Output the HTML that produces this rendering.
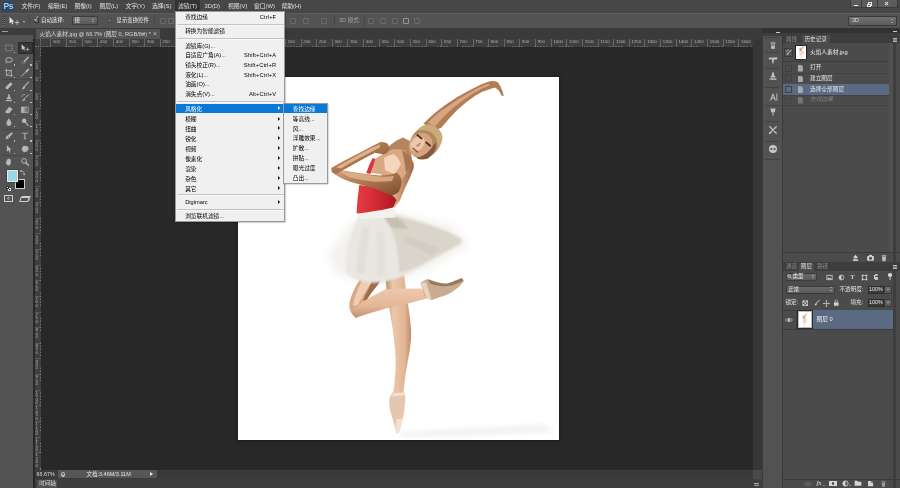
<!DOCTYPE html>
<html lang="zh-CN">
<head>
<meta charset="utf-8">
<title>Photoshop</title>
<style>
*{box-sizing:border-box;margin:0;padding:0}
html,body{width:900px;height:488px;overflow:hidden;background:#282828}
body{will-change:transform}
body{position:relative;font-family:"Liberation Sans","Noto Sans CJK SC",sans-serif;font-size:5.6px;line-height:1;color:#d6d6d6;-webkit-font-smoothing:antialiased}
.a{position:absolute;white-space:nowrap}
#menubar{left:0;top:0;width:900px;height:13px;background:#474747}
#optbar{left:0;top:13px;width:900px;height:15px;background:#535353;border-top:1px solid #5e5e5e}
#tabbar{left:33px;top:28px;width:730px;height:11px;background:#3a3a3a}
#tab{left:36px;top:29px;width:124px;height:10px;background:#535353}
#toolbox{left:0;top:28px;width:33px;height:460px;background:#535353}
#toolhead{left:0;top:28px;width:33px;height:7px;background:#3c3c3c}
#rulerh{left:34.5px;top:39px;width:718px;height:8px;background:#3e3e3e}
#rulerv{left:34.5px;top:39px;width:6.5px;height:431px;background:#3e3e3e}
#canvas{left:41px;top:47px;width:711.5px;height:423px;background:#282828}
#photo{left:238.3px;top:76.5px;width:320.7px;height:363.5px;background:#fff;box-shadow:0 0 2.5px 0.5px #1b1b1b}
#statusbar{left:34.5px;top:470px;width:718px;height:8.7px;background:#3a3a3a}
#timeline{left:34.5px;top:478.7px;width:728px;height:9.3px;background:#3e3e3e}
#vscroll{left:752.5px;top:39px;width:9.5px;height:431px;background:#373737}
#rightdock{left:762px;top:28px;width:138px;height:460px;background:#3a3a3a}
.mi{color:#e0e0e0;top:3.9px;font-size:5.8px}
.rl{font-size:4.3px;color:#b4b4b4}
.mt{font-size:5.7px}
.ti{opacity:.78}
.ot{color:#ececec;font-size:5.4px;margin-top:.2px}
</style>
</head>
<body>
<div class="a" id="menubar"></div>
<div class="a" id="optbar"></div>
<div class="a" id="rightdock"></div>
<div class="a" id="tabbar"></div>
<div class="a" id="tab"></div>
<div class="a" id="toolbox"></div>
<div class="a" id="toolhead"></div>
<div class="a" id="canvas"></div>
<div class="a" id="rulerh"></div>
<div class="a" id="rulerv"></div>
<div class="a" id="vscroll"></div>
<div class="a" id="photo"></div>
<div class="a" id="statusbar"></div>
<div class="a" id="timeline"></div>

<div class="a" style="left:2px;top:1px;width:12px;height:11px;background:#2c4866;border-radius:1px"></div>
<div class="a" style="left:3.5px;top:1.5px;font-size:8.5px;font-weight:bold;color:#a5cdf0;letter-spacing:-0.3px">Ps</div>
<div class="a" style="left:174.5px;top:0;width:25px;height:13px;background:#333"></div>
<div class="a mi" style="left:21.5px">文件(F)</div>
<div class="a mi" style="left:48px">编辑(E)</div>
<div class="a mi" style="left:74.5px">图像(I)</div>
<div class="a mi" style="left:99.5px">图层(L)</div>
<div class="a mi" style="left:125.5px">文字(Y)</div>
<div class="a mi" style="left:152px">选择(S)</div>
<div class="a mi" style="left:178px">滤镜(T)</div>
<div class="a mi" style="left:204.5px">3D(D)</div>
<div class="a mi" style="left:228px">视图(V)</div>
<div class="a mi" style="left:254px">窗口(W)</div>
<div class="a mi" style="left:281.5px">帮助(H)</div>
<div class="a" style="left:850px;top:0;width:12px;height:8px;background:#5c5c5c;border:1px solid #3a3a3a;border-top:0"></div>
<div class="a" style="left:862px;top:0;width:16px;height:8px;background:#5c5c5c;border:1px solid #3a3a3a;border-top:0;border-left:0"></div>
<div class="a" style="left:878px;top:0;width:20px;height:8px;background:#5c5c5c;border:1px solid #3a3a3a;border-top:0;border-left:0"></div>
<div class="a" style="left:853.5px;top:4.5px;width:4.5px;height:1.5px;background:#e8e8e8"></div>
<div class="a" style="left:868px;top:2px;width:4px;height:3.5px;border:1px solid #e8e8e8"></div>
<div class="a" style="left:866.5px;top:3.5px;width:4px;height:3.5px;border:1px solid #e8e8e8;background:#5c5c5c"></div>
<div class="a" style="left:884.5px;top:-0.5px;font-size:7px;font-weight:bold;color:#ececec">×</div>
<!--MENUBAR-->

<svg class="a" style="left:8px;top:16px" width="12" height="10" viewBox="0 0 12 10"><path d="M1.5 1 L1.5 7.5 L3.2 6 L4.4 8.6 L5.4 8.1 L4.3 5.7 L6.3 5.5 Z" fill="#e6e6e6"/><path d="M9 4.2v4.6M6.7 6.5h4.6" stroke="#d0d0d0" stroke-width="0.8"/></svg>
<div class="a" style="left:22.5px;top:20.5px;width:0;height:0;border-left:1.6px solid transparent;border-right:1.6px solid transparent;border-top:2px solid #bdbdbd"></div>
<div class="a" style="left:28.5px;top:15px;width:1px;height:11px;background:#464646"></div>
<div class="a" style="left:33.5px;top:17.5px;width:5.5px;height:5.5px;background:#6a6a6a;border:0.5px solid #3a3a3a"></div>
<div class="a" style="left:34px;top:16px;font-size:6px;color:#f0f0f0">✓</div>
<div class="a ot" style="left:41px;top:17.5px">自动选择:</div>
<div class="a" style="left:71.5px;top:16px;width:26px;height:9px;background:linear-gradient(#6b6b6b,#5a5a5a);border:0.5px solid #3c3c3c;border-radius:1px"></div>
<div class="a ot" style="left:74.5px;top:17.5px">组</div>
<div class="a" style="left:92px;top:18.5px;width:0;height:0;border-left:1.4px solid transparent;border-right:1.4px solid transparent;border-bottom:1.6px solid #cfcfcf"></div>
<div class="a" style="left:92px;top:21.2px;width:0;height:0;border-left:1.4px solid transparent;border-right:1.4px solid transparent;border-top:1.6px solid #cfcfcf"></div>
<div class="a" style="left:106.8px;top:17.8px;width:5px;height:5px;background:#606060;border:0.5px solid #474747"></div>
<div class="a ot" style="left:116.5px;top:17.5px">显示变换控件</div>
<div class="a" style="left:153.5px;top:15px;width:1px;height:11px;background:#464646"></div>
<div class="a" style="left:334px;top:15px;width:1px;height:11px;background:#464646"></div>
<div class="a" style="left:364px;top:15px;width:1px;height:11px;background:#464646"></div>
<div class="a" style="left:339px;top:17.5px;font-size:5.6px;color:#a2a2a2">3D 模式:</div>
<div class="a" style="left:848px;top:16px;width:49px;height:10px;background:linear-gradient(#707070,#5c5c5c);border:0.5px solid #3a3a3a;border-radius:1px"></div>
<div class="a" style="left:852px;top:18px;font-size:5.6px;color:#dcdcdc">3D</div>
<div class="a" style="left:890.5px;top:18.5px;width:0;height:0;border-left:1.4px solid transparent;border-right:1.4px solid transparent;border-bottom:1.6px solid #cfcfcf"></div>
<div class="a" style="left:890.5px;top:21.5px;width:0;height:0;border-left:1.4px solid transparent;border-right:1.4px solid transparent;border-top:1.6px solid #cfcfcf"></div>
<div class="a" style="left:160px;top:18px;width:6px;height:6px;border:0.8px solid #7c7c7c;opacity:.55;border-radius:1px"></div>
<div class="a" style="left:168px;top:18px;width:6px;height:6px;border:0.8px solid #7c7c7c;opacity:.55;border-radius:1px"></div>
<div class="a" style="left:176px;top:18px;width:6px;height:6px;border:0.8px solid #7c7c7c;opacity:.55;border-radius:1px"></div>
<div class="a" style="left:187px;top:18px;width:6px;height:6px;border:0.8px solid #7c7c7c;opacity:.55;border-radius:1px"></div>
<div class="a" style="left:195px;top:18px;width:6px;height:6px;border:0.8px solid #7c7c7c;opacity:.55;border-radius:1px"></div>
<div class="a" style="left:203px;top:18px;width:6px;height:6px;border:0.8px solid #7c7c7c;opacity:.55;border-radius:1px"></div>
<div class="a" style="left:216px;top:18px;width:6px;height:6px;border:0.8px solid #7c7c7c;opacity:.55;border-radius:1px"></div>
<div class="a" style="left:224px;top:18px;width:6px;height:6px;border:0.8px solid #7c7c7c;opacity:.55;border-radius:1px"></div>
<div class="a" style="left:232px;top:18px;width:6px;height:6px;border:0.8px solid #7c7c7c;opacity:.55;border-radius:1px"></div>
<div class="a" style="left:243px;top:18px;width:6px;height:6px;border:0.8px solid #7c7c7c;opacity:.55;border-radius:1px"></div>
<div class="a" style="left:251px;top:18px;width:6px;height:6px;border:0.8px solid #7c7c7c;opacity:.55;border-radius:1px"></div>
<div class="a" style="left:259px;top:18px;width:6px;height:6px;border:0.8px solid #7c7c7c;opacity:.55;border-radius:1px"></div>
<div class="a" style="left:290px;top:18px;width:6px;height:6px;border:0.8px solid #7c7c7c;opacity:.55;border-radius:1px"></div>
<div class="a" style="left:303px;top:18px;width:6px;height:6px;border:0.8px solid #7c7c7c;opacity:.55;border-radius:1px"></div>
<div class="a" style="left:321px;top:18px;width:6px;height:6px;border:0.8px solid #7c7c7c;opacity:.55;border-radius:1px"></div>
<div class="a" style="left:368px;top:18px;width:6px;height:6px;border:0.8px solid #7c7c7c;opacity:.55;border-radius:1px"></div>
<div class="a" style="left:379.5px;top:18px;width:6px;height:6px;border:0.8px solid #7c7c7c;opacity:.55;border-radius:1px"></div>
<div class="a" style="left:391.5px;top:18px;width:6px;height:6px;border:0.8px solid #7c7c7c;opacity:.55;border-radius:1px"></div>
<div class="a" style="left:402.5px;top:18px;width:6px;height:6px;border:0.8px solid #c8c8c8;opacity:.55;border-radius:1px"></div>
<div class="a" style="left:413.5px;top:18px;width:6px;height:6px;border:0.8px solid #7c7c7c;opacity:.55;border-radius:1px"></div>
<div class="a" style="left:1.5px;top:15.5px;width:1px;height:10px;background:repeating-linear-gradient(180deg,#3a3a3a 0 1px,#6a6a6a 1px 2px)"></div>
<div class="a" style="left:3.5px;top:15.5px;width:1px;height:10px;background:repeating-linear-gradient(180deg,#3a3a3a 0 1px,#6a6a6a 1px 2px)"></div>
<!--OPTIONS-->

<div class="a" style="left:39.5px;top:32px;font-size:5.7px;color:#d8d8d8">火焰人素材.jpg @ 66.7% (图层 0, RGB/8#) *</div>
<div class="a" style="left:153px;top:31.2px;font-size:6.5px;color:#c4c4c4">×</div>
<div class="a rl" style="left:53.2px;top:40.3px">600</div><div class="a" style="left:50.4px;top:39px;width:0.6px;height:8px;background:#676767"></div><div class="a rl" style="left:68.9px;top:40.3px">550</div><div class="a" style="left:66.1px;top:39px;width:0.6px;height:8px;background:#676767"></div><div class="a rl" style="left:84.5px;top:40.3px">500</div><div class="a" style="left:81.7px;top:39px;width:0.6px;height:8px;background:#676767"></div><div class="a rl" style="left:100.1px;top:40.3px">450</div><div class="a" style="left:97.3px;top:39px;width:0.6px;height:8px;background:#676767"></div><div class="a rl" style="left:115.8px;top:40.3px">400</div><div class="a" style="left:113.0px;top:39px;width:0.6px;height:8px;background:#676767"></div><div class="a rl" style="left:131.4px;top:40.3px">350</div><div class="a" style="left:128.6px;top:39px;width:0.6px;height:8px;background:#676767"></div><div class="a rl" style="left:147.0px;top:40.3px">300</div><div class="a" style="left:144.2px;top:39px;width:0.6px;height:8px;background:#676767"></div><div class="a rl" style="left:162.6px;top:40.3px">250</div><div class="a" style="left:159.8px;top:39px;width:0.6px;height:8px;background:#676767"></div><div class="a rl" style="left:178.3px;top:40.3px">200</div><div class="a" style="left:175.5px;top:39px;width:0.6px;height:8px;background:#676767"></div><div class="a rl" style="left:193.9px;top:40.3px">150</div><div class="a" style="left:191.1px;top:39px;width:0.6px;height:8px;background:#676767"></div><div class="a rl" style="left:209.5px;top:40.3px">100</div><div class="a" style="left:206.7px;top:39px;width:0.6px;height:8px;background:#676767"></div><div class="a rl" style="left:225.2px;top:40.3px">50</div><div class="a" style="left:222.4px;top:39px;width:0.6px;height:8px;background:#676767"></div><div class="a rl" style="left:240.8px;top:40.3px">0</div><div class="a" style="left:238.0px;top:39px;width:0.6px;height:8px;background:#676767"></div><div class="a rl" style="left:256.4px;top:40.3px">50</div><div class="a" style="left:253.6px;top:39px;width:0.6px;height:8px;background:#676767"></div><div class="a rl" style="left:272.1px;top:40.3px">100</div><div class="a" style="left:269.3px;top:39px;width:0.6px;height:8px;background:#676767"></div><div class="a rl" style="left:287.7px;top:40.3px">150</div><div class="a" style="left:284.9px;top:39px;width:0.6px;height:8px;background:#676767"></div><div class="a rl" style="left:303.3px;top:40.3px">200</div><div class="a" style="left:300.5px;top:39px;width:0.6px;height:8px;background:#676767"></div><div class="a rl" style="left:318.9px;top:40.3px">250</div><div class="a" style="left:316.1px;top:39px;width:0.6px;height:8px;background:#676767"></div><div class="a rl" style="left:334.6px;top:40.3px">300</div><div class="a" style="left:331.8px;top:39px;width:0.6px;height:8px;background:#676767"></div><div class="a rl" style="left:350.2px;top:40.3px">350</div><div class="a" style="left:347.4px;top:39px;width:0.6px;height:8px;background:#676767"></div><div class="a rl" style="left:365.8px;top:40.3px">400</div><div class="a" style="left:363.0px;top:39px;width:0.6px;height:8px;background:#676767"></div><div class="a rl" style="left:381.5px;top:40.3px">450</div><div class="a" style="left:378.7px;top:39px;width:0.6px;height:8px;background:#676767"></div><div class="a rl" style="left:397.1px;top:40.3px">500</div><div class="a" style="left:394.3px;top:39px;width:0.6px;height:8px;background:#676767"></div><div class="a rl" style="left:412.7px;top:40.3px">550</div><div class="a" style="left:409.9px;top:39px;width:0.6px;height:8px;background:#676767"></div><div class="a rl" style="left:428.4px;top:40.3px">600</div><div class="a" style="left:425.6px;top:39px;width:0.6px;height:8px;background:#676767"></div><div class="a rl" style="left:444.0px;top:40.3px">650</div><div class="a" style="left:441.2px;top:39px;width:0.6px;height:8px;background:#676767"></div><div class="a rl" style="left:459.6px;top:40.3px">700</div><div class="a" style="left:456.8px;top:39px;width:0.6px;height:8px;background:#676767"></div><div class="a rl" style="left:475.3px;top:40.3px">750</div><div class="a" style="left:472.5px;top:39px;width:0.6px;height:8px;background:#676767"></div><div class="a rl" style="left:490.9px;top:40.3px">800</div><div class="a" style="left:488.1px;top:39px;width:0.6px;height:8px;background:#676767"></div><div class="a rl" style="left:506.5px;top:40.3px">850</div><div class="a" style="left:503.7px;top:39px;width:0.6px;height:8px;background:#676767"></div><div class="a rl" style="left:522.1px;top:40.3px">900</div><div class="a" style="left:519.3px;top:39px;width:0.6px;height:8px;background:#676767"></div><div class="a rl" style="left:537.8px;top:40.3px">950</div><div class="a" style="left:535.0px;top:39px;width:0.6px;height:8px;background:#676767"></div><div class="a rl" style="left:553.4px;top:40.3px">1000</div><div class="a" style="left:550.6px;top:39px;width:0.6px;height:8px;background:#676767"></div><div class="a rl" style="left:569.0px;top:40.3px">1050</div><div class="a" style="left:566.2px;top:39px;width:0.6px;height:8px;background:#676767"></div><div class="a rl" style="left:584.7px;top:40.3px">1100</div><div class="a" style="left:581.9px;top:39px;width:0.6px;height:8px;background:#676767"></div><div class="a rl" style="left:600.3px;top:40.3px">1150</div><div class="a" style="left:597.5px;top:39px;width:0.6px;height:8px;background:#676767"></div><div class="a rl" style="left:615.9px;top:40.3px">1200</div><div class="a" style="left:613.1px;top:39px;width:0.6px;height:8px;background:#676767"></div><div class="a rl" style="left:631.6px;top:40.3px">1250</div><div class="a" style="left:628.8px;top:39px;width:0.6px;height:8px;background:#676767"></div><div class="a rl" style="left:647.2px;top:40.3px">1300</div><div class="a" style="left:644.4px;top:39px;width:0.6px;height:8px;background:#676767"></div><div class="a rl" style="left:662.8px;top:40.3px">1350</div><div class="a" style="left:660.0px;top:39px;width:0.6px;height:8px;background:#676767"></div><div class="a rl" style="left:678.4px;top:40.3px">1400</div><div class="a" style="left:675.6px;top:39px;width:0.6px;height:8px;background:#676767"></div><div class="a rl" style="left:694.1px;top:40.3px">1450</div><div class="a" style="left:691.3px;top:39px;width:0.6px;height:8px;background:#676767"></div><div class="a rl" style="left:709.7px;top:40.3px">1500</div><div class="a" style="left:706.9px;top:39px;width:0.6px;height:8px;background:#676767"></div><div class="a rl" style="left:725.3px;top:40.3px">1550</div><div class="a" style="left:722.5px;top:39px;width:0.6px;height:8px;background:#676767"></div><div class="a rl" style="left:741.0px;top:40.3px">1600</div><div class="a" style="left:738.2px;top:39px;width:0.6px;height:8px;background:#676767"></div><div class="a" style="left:34.5px;top:61.4px;width:6.5px;height:0.6px;background:#585858"></div><div class="a rl" style="left:35.6px;top:62.6px">5</div><div class="a rl" style="left:35.6px;top:66.0px">0</div><div class="a" style="left:34.5px;top:77.0px;width:6.5px;height:0.6px;background:#585858"></div><div class="a rl" style="left:35.6px;top:78.2px">0</div><div class="a" style="left:34.5px;top:92.6px;width:6.5px;height:0.6px;background:#585858"></div><div class="a rl" style="left:35.6px;top:93.8px">5</div><div class="a rl" style="left:35.6px;top:97.2px">0</div><div class="a" style="left:34.5px;top:108.3px;width:6.5px;height:0.6px;background:#585858"></div><div class="a rl" style="left:35.6px;top:109.5px">1</div><div class="a rl" style="left:35.6px;top:112.9px">0</div><div class="a rl" style="left:35.6px;top:116.3px">0</div><div class="a" style="left:34.5px;top:123.9px;width:6.5px;height:0.6px;background:#585858"></div><div class="a rl" style="left:35.6px;top:125.1px">1</div><div class="a rl" style="left:35.6px;top:128.5px">5</div><div class="a rl" style="left:35.6px;top:131.9px">0</div><div class="a" style="left:34.5px;top:139.5px;width:6.5px;height:0.6px;background:#585858"></div><div class="a rl" style="left:35.6px;top:140.7px">2</div><div class="a rl" style="left:35.6px;top:144.1px">0</div><div class="a rl" style="left:35.6px;top:147.5px">0</div><div class="a" style="left:34.5px;top:155.2px;width:6.5px;height:0.6px;background:#585858"></div><div class="a rl" style="left:35.6px;top:156.3px">2</div><div class="a rl" style="left:35.6px;top:159.8px">5</div><div class="a rl" style="left:35.6px;top:163.2px">0</div><div class="a" style="left:34.5px;top:170.8px;width:6.5px;height:0.6px;background:#585858"></div><div class="a rl" style="left:35.6px;top:172.0px">3</div><div class="a rl" style="left:35.6px;top:175.4px">0</div><div class="a rl" style="left:35.6px;top:178.8px">0</div><div class="a" style="left:34.5px;top:186.4px;width:6.5px;height:0.6px;background:#585858"></div><div class="a rl" style="left:35.6px;top:187.6px">3</div><div class="a rl" style="left:35.6px;top:191.0px">5</div><div class="a rl" style="left:35.6px;top:194.4px">0</div><div class="a" style="left:34.5px;top:202.0px;width:6.5px;height:0.6px;background:#585858"></div><div class="a rl" style="left:35.6px;top:203.2px">4</div><div class="a rl" style="left:35.6px;top:206.6px">0</div><div class="a rl" style="left:35.6px;top:210.0px">0</div><div class="a" style="left:34.5px;top:217.7px;width:6.5px;height:0.6px;background:#585858"></div><div class="a rl" style="left:35.6px;top:218.9px">4</div><div class="a rl" style="left:35.6px;top:222.3px">5</div><div class="a rl" style="left:35.6px;top:225.7px">0</div><div class="a" style="left:34.5px;top:233.3px;width:6.5px;height:0.6px;background:#585858"></div><div class="a rl" style="left:35.6px;top:234.5px">5</div><div class="a rl" style="left:35.6px;top:237.9px">0</div><div class="a rl" style="left:35.6px;top:241.3px">0</div><div class="a" style="left:34.5px;top:248.9px;width:6.5px;height:0.6px;background:#585858"></div><div class="a rl" style="left:35.6px;top:250.1px">5</div><div class="a rl" style="left:35.6px;top:253.5px">5</div><div class="a rl" style="left:35.6px;top:256.9px">0</div><div class="a" style="left:34.5px;top:264.6px;width:6.5px;height:0.6px;background:#585858"></div><div class="a rl" style="left:35.6px;top:265.8px">6</div><div class="a rl" style="left:35.6px;top:269.2px">0</div><div class="a rl" style="left:35.6px;top:272.6px">0</div><div class="a" style="left:34.5px;top:280.2px;width:6.5px;height:0.6px;background:#585858"></div><div class="a rl" style="left:35.6px;top:281.4px">6</div><div class="a rl" style="left:35.6px;top:284.8px">5</div><div class="a rl" style="left:35.6px;top:288.2px">0</div><div class="a" style="left:34.5px;top:295.8px;width:6.5px;height:0.6px;background:#585858"></div><div class="a rl" style="left:35.6px;top:297.0px">7</div><div class="a rl" style="left:35.6px;top:300.4px">0</div><div class="a rl" style="left:35.6px;top:303.8px">0</div><div class="a" style="left:34.5px;top:311.5px;width:6.5px;height:0.6px;background:#585858"></div><div class="a rl" style="left:35.6px;top:312.7px">7</div><div class="a rl" style="left:35.6px;top:316.1px">5</div><div class="a rl" style="left:35.6px;top:319.5px">0</div><div class="a" style="left:34.5px;top:327.1px;width:6.5px;height:0.6px;background:#585858"></div><div class="a rl" style="left:35.6px;top:328.3px">8</div><div class="a rl" style="left:35.6px;top:331.7px">0</div><div class="a rl" style="left:35.6px;top:335.1px">0</div><div class="a" style="left:34.5px;top:342.7px;width:6.5px;height:0.6px;background:#585858"></div><div class="a rl" style="left:35.6px;top:343.9px">8</div><div class="a rl" style="left:35.6px;top:347.3px">5</div><div class="a rl" style="left:35.6px;top:350.7px">0</div><div class="a" style="left:34.5px;top:358.3px;width:6.5px;height:0.6px;background:#585858"></div><div class="a rl" style="left:35.6px;top:359.5px">9</div><div class="a rl" style="left:35.6px;top:362.9px">0</div><div class="a rl" style="left:35.6px;top:366.3px">0</div><div class="a" style="left:34.5px;top:374.0px;width:6.5px;height:0.6px;background:#585858"></div><div class="a rl" style="left:35.6px;top:375.2px">9</div><div class="a rl" style="left:35.6px;top:378.6px">5</div><div class="a rl" style="left:35.6px;top:382.0px">0</div><div class="a" style="left:34.5px;top:389.6px;width:6.5px;height:0.6px;background:#585858"></div><div class="a rl" style="left:35.6px;top:390.8px">1</div><div class="a rl" style="left:35.6px;top:394.2px">0</div><div class="a rl" style="left:35.6px;top:397.6px">0</div><div class="a rl" style="left:35.6px;top:401.0px">0</div><div class="a" style="left:34.5px;top:405.2px;width:6.5px;height:0.6px;background:#585858"></div><div class="a rl" style="left:35.6px;top:406.4px">1</div><div class="a rl" style="left:35.6px;top:409.8px">0</div><div class="a rl" style="left:35.6px;top:413.2px">5</div><div class="a rl" style="left:35.6px;top:416.6px">0</div><div class="a" style="left:34.5px;top:420.9px;width:6.5px;height:0.6px;background:#585858"></div><div class="a rl" style="left:35.6px;top:422.1px">1</div><div class="a rl" style="left:35.6px;top:425.5px">1</div><div class="a rl" style="left:35.6px;top:428.9px">0</div><div class="a rl" style="left:35.6px;top:432.3px">0</div><div class="a" style="left:34.5px;top:436.5px;width:6.5px;height:0.6px;background:#585858"></div><div class="a rl" style="left:35.6px;top:437.7px">1</div><div class="a rl" style="left:35.6px;top:441.1px">1</div><div class="a rl" style="left:35.6px;top:444.5px">5</div><div class="a rl" style="left:35.6px;top:447.9px">0</div><div class="a" style="left:34.5px;top:452.1px;width:6.5px;height:0.6px;background:#585858"></div><div class="a rl" style="left:35.6px;top:453.3px">1</div><div class="a rl" style="left:35.6px;top:456.7px">2</div><div class="a rl" style="left:35.6px;top:460.1px">0</div><div class="a rl" style="left:35.6px;top:463.5px">0</div>
<div class="a" style="left:41px;top:45.5px;width:711px;height:1.5px;background:repeating-linear-gradient(90deg,#8a8a8a 0 0.6px,transparent 0.6px 3.126px);background-position:-0.6px 0"></div>
<div class="a" style="left:39.5px;top:47px;width:1.5px;height:423px;background:repeating-linear-gradient(180deg,#8a8a8a 0 0.6px,transparent 0.6px 3.126px);background-position:0 -1.3px"></div>
<div class="a" style="left:34.5px;top:39px;width:6.5px;height:8px;background:#3e3e3e;border-right:0.5px dotted #777;border-bottom:0.5px dotted #777"></div>
<svg class="a" width="0" height="0"><defs><linearGradient id="gg"><stop offset="0" stop-color="#eee"/><stop offset="1" stop-color="#555"/></linearGradient></defs></svg>
<div class="a" style="left:17.5px;top:41.5px;width:15px;height:12px;background:#363636;border:0.5px solid #2a2a2a;border-radius:1px"></div>
<div class="a" style="left:2px;top:30.5px;width:6px;height:1.5px;background:#9a9a9a"></div>
<svg class="a ti" style="left:3.6px;top:42.7px" width="9.8" height="9.8" viewBox="0 0 12 12"><rect x="2" y="2.5" width="8" height="7" fill="none" stroke="#d4d4d4" stroke-width="0.9" stroke-dasharray="1.3 1"/></svg>
<div class="a" style="left:13.5px;top:51.6px;width:1.4px;height:1.4px;background:#bcbcbc"></div>
<svg class="a ti" style="left:20.4px;top:42.7px" width="9.8" height="9.8" viewBox="0 0 12 12"><path d="M2 1.5 L2 8.5 L3.8 7 L5 9.6 L6.1 9.1 L4.9 6.6 L7 6.4 Z" fill="#f0f0f0"/><path d="M9.3 5.6v4.4M7.1 7.8h4.4" stroke="#e0e0e0" stroke-width="0.9"/></svg>
<svg class="a ti" style="left:3.6px;top:55.5px" width="9.8" height="9.8" viewBox="0 0 12 12"><ellipse cx="6.2" cy="4.8" rx="4" ry="2.8" fill="none" stroke="#d4d4d4" stroke-width="1.2"/><path d="M3 6.5 Q1.5 8 3 9.8" fill="none" stroke="#d4d4d4" stroke-width="0.9"/></svg>
<div class="a" style="left:13.5px;top:64.4px;width:1.4px;height:1.4px;background:#bcbcbc"></div>
<svg class="a ti" style="left:20.4px;top:55.5px" width="9.8" height="9.8" viewBox="0 0 12 12"><path d="M10 1.5 L5.5 6.5" stroke="#d4d4d4" stroke-width="1.6" stroke-linecap="round"/><ellipse cx="4" cy="8" rx="2.2" ry="1.6" fill="none" stroke="#d4d4d4" stroke-width="0.8" stroke-dasharray="1 .7"/></svg>
<div class="a" style="left:30.3px;top:64.4px;width:1.4px;height:1.4px;background:#bcbcbc"></div>
<svg class="a ti" style="left:3.6px;top:68.0px" width="9.8" height="9.8" viewBox="0 0 12 12"><path d="M3 1v8h8M1 3h8v8" fill="none" stroke="#d4d4d4" stroke-width="1"/><path d="M2 10 L10 2" stroke="#d4d4d4" stroke-width=".7"/></svg>
<div class="a" style="left:13.5px;top:76.9px;width:1.4px;height:1.4px;background:#bcbcbc"></div>
<svg class="a ti" style="left:20.4px;top:68.0px" width="9.8" height="9.8" viewBox="0 0 12 12"><path d="M10.2 1.8 L7.8 4.2" stroke="#d4d4d4" stroke-width="2.2" stroke-linecap="round"/><path d="M7.5 4.5 L2.5 9.5 L2 10" stroke="#d4d4d4" stroke-width="1.2" stroke-linecap="round"/></svg>
<div class="a" style="left:30.3px;top:76.9px;width:1.4px;height:1.4px;background:#bcbcbc"></div>
<svg class="a ti" style="left:3.6px;top:80.9px" width="9.8" height="9.8" viewBox="0 0 12 12"><rect x="1" y="4.2" width="10" height="3.6" rx="1.6" transform="rotate(-45 6 6)" fill="#d4d4d4"/></svg>
<div class="a" style="left:13.5px;top:89.8px;width:1.4px;height:1.4px;background:#bcbcbc"></div>
<svg class="a ti" style="left:20.4px;top:80.9px" width="9.8" height="9.8" viewBox="0 0 12 12"><path d="M10.5 1.5 L5.5 6.5" stroke="#d4d4d4" stroke-width="1.3" stroke-linecap="round"/><path d="M5.6 6.2 Q3.8 6.4 3.4 8.2 Q3 9.6 1.5 10 Q4.8 10.6 6 8.6 Q6.5 7.4 5.6 6.2Z" fill="#d4d4d4"/></svg>
<div class="a" style="left:30.3px;top:89.8px;width:1.4px;height:1.4px;background:#bcbcbc"></div>
<svg class="a ti" style="left:3.6px;top:92.9px" width="9.8" height="9.8" viewBox="0 0 12 12"><path d="M5 1.5h2v3.2l1.8 1.8v1.2H3.2V6.5L5 4.7Z" fill="#d4d4d4"/><rect x="2.2" y="8.6" width="7.6" height="1.4" fill="#d4d4d4"/></svg>
<div class="a" style="left:13.5px;top:101.8px;width:1.4px;height:1.4px;background:#bcbcbc"></div>
<svg class="a ti" style="left:20.4px;top:92.9px" width="9.8" height="9.8" viewBox="0 0 12 12"><path d="M10.5 2 L6 6.5" stroke="#d4d4d4" stroke-width="1.2" stroke-linecap="round"/><path d="M6 6.3 Q4.2 6.6 3.8 8.2 Q3.4 9.4 2.2 9.8 Q5 10.4 6.2 8.6Z" fill="#d4d4d4"/><path d="M2 5 A3.4 3.4 0 0 1 6.5 2" fill="none" stroke="#d4d4d4" stroke-width=".8"/></svg>
<div class="a" style="left:30.3px;top:101.8px;width:1.4px;height:1.4px;background:#bcbcbc"></div>
<svg class="a ti" style="left:3.6px;top:104.9px" width="9.8" height="9.8" viewBox="0 0 12 12"><path d="M6.5 2 L10.5 5 L6.5 10 L2.5 10 L1.5 8.2Z" fill="#d4d4d4"/></svg>
<div class="a" style="left:13.5px;top:113.8px;width:1.4px;height:1.4px;background:#bcbcbc"></div>
<svg class="a ti" style="left:20.4px;top:104.9px" width="9.8" height="9.8" viewBox="0 0 12 12"><rect x="2" y="2.5" width="8" height="7" fill="url(#gg)" stroke="#d4d4d4" stroke-width=".8"/></svg>
<div class="a" style="left:30.3px;top:113.8px;width:1.4px;height:1.4px;background:#bcbcbc"></div>
<svg class="a ti" style="left:3.6px;top:116.7px" width="9.8" height="9.8" viewBox="0 0 12 12"><path d="M6 1.5 Q9.5 6.5 9 8 A3 3 0 0 1 3 8 Q2.5 6.5 6 1.5Z" fill="#d4d4d4"/></svg>
<div class="a" style="left:13.5px;top:125.6px;width:1.4px;height:1.4px;background:#bcbcbc"></div>
<svg class="a ti" style="left:20.4px;top:116.7px" width="9.8" height="9.8" viewBox="0 0 12 12"><circle cx="5" cy="4.5" r="2.8" fill="#d4d4d4"/><path d="M6.8 6.6 L10 10.2" stroke="#d4d4d4" stroke-width="1.4" stroke-linecap="round"/></svg>
<div class="a" style="left:30.3px;top:125.6px;width:1.4px;height:1.4px;background:#bcbcbc"></div>
<svg class="a ti" style="left:3.6px;top:131.3px" width="9.8" height="9.8" viewBox="0 0 12 12"><path d="M9.5 1.5 L10.8 2.8 L6 9 L2 10.5 L3.2 6.5Z" fill="#d4d4d4"/><circle cx="5.5" cy="7" r=".7" fill="#535353"/></svg>
<div class="a" style="left:13.5px;top:140.2px;width:1.4px;height:1.4px;background:#bcbcbc"></div>
<svg class="a ti" style="left:20.4px;top:131.3px" width="9.8" height="9.8" viewBox="0 0 12 12"><path d="M2.5 2h7v1.8h-.8V3H6.6v6.2h1V10H4.4V9.2h1V3H3.3v.8h-.8Z" fill="#d4d4d4"/></svg>
<div class="a" style="left:30.3px;top:140.2px;width:1.4px;height:1.4px;background:#bcbcbc"></div>
<svg class="a ti" style="left:3.6px;top:143.7px" width="9.8" height="9.8" viewBox="0 0 12 12"><path d="M3.5 1.5 L3.5 9.5 L5.5 7.6 L6.9 10.6 L8 10.1 L6.7 7.2 L9.2 7 Z" fill="#d4d4d4"/></svg>
<div class="a" style="left:13.5px;top:152.6px;width:1.4px;height:1.4px;background:#bcbcbc"></div>
<svg class="a ti" style="left:20.4px;top:143.7px" width="9.8" height="9.8" viewBox="0 0 12 12"><path d="M3 4 Q4 1.5 6.5 2.5 Q9 1.8 10 4 Q11.5 6 9.5 7.5 Q9.5 10 7 9.5 Q4.5 10.8 3.5 8.5 Q1 7 3 4Z" fill="#d4d4d4"/></svg>
<div class="a" style="left:30.3px;top:152.6px;width:1.4px;height:1.4px;background:#bcbcbc"></div>
<svg class="a ti" style="left:3.6px;top:157.4px" width="9.8" height="9.8" viewBox="0 0 12 12"><path d="M3.2 6V3.4Q3.9 2.8 4.4 3.4V2.4Q5.1 1.8 5.7 2.4V2.2Q6.4 1.6 7 2.3V3Q7.7 2.5 8.3 3.2V7.2Q8.3 10 6 10.4Q4 10.4 3.2 8.8L1.8 6.4Q2.4 5.4 3.2 6Z" fill="#d4d4d4"/></svg>
<svg class="a ti" style="left:20.4px;top:157.4px" width="9.8" height="9.8" viewBox="0 0 12 12"><circle cx="5" cy="4.8" r="2.9" fill="none" stroke="#d4d4d4" stroke-width="1.2"/><path d="M7.2 7 L10.3 10.2" stroke="#d4d4d4" stroke-width="1.6" stroke-linecap="round"/></svg>
<div class="a" style="left:2px;top:79.3px;width:29px;height:0.6px;background:#464646"></div>
<div class="a" style="left:2px;top:128.9px;width:29px;height:0.6px;background:#464646"></div>
<div class="a" style="left:2px;top:155.4px;width:29px;height:0.6px;background:#464646"></div>
<div class="a" style="left:14.5px;top:178.5px;width:10px;height:10.5px;background:#000;border:0.6px solid #d0d0d0"></div>
<div class="a" style="left:6.8px;top:170.4px;width:11.2px;height:11.4px;background:#9ad7e6;border:0.6px solid #e8e8e8;box-shadow:0 0 0 .5px #333"></div>
<svg class="a" style="left:19px;top:168.5px" width="7" height="7" viewBox="0 0 7 7"><path d="M1.5 2 Q5 1.5 5.2 5.5" fill="none" stroke="#bdbdbd" stroke-width=".8"/><path d="M0.6 2.1 l1.8 -1.2 v2.4z M5.2 6.6 l-1.2-1.8 h2.4z" fill="#bdbdbd"/></svg>
<div class="a" style="left:7.5px;top:187.5px;width:3.2px;height:3.2px;background:#111;border:.5px solid #ddd"></div>
<div class="a" style="left:5.5px;top:185.5px;width:3.2px;height:3.2px;background:#f4f4f4;border:.5px solid #333"></div>
<div class="a" style="left:4.2px;top:195.2px;width:9px;height:6.6px;border:.8px solid #cfcfcf;border-radius:.5px"></div>
<div class="a" style="left:6.9px;top:196.8px;width:3.6px;height:3.4px;border:.7px dotted #cfcfcf;border-radius:50%"></div>
<div class="a" style="left:21px;top:195.5px;width:8.5px;height:5px;border:.8px solid #cfcfcf;transform:skewX(-18deg)"></div>
<div class="a" style="left:20px;top:197.3px;width:8.5px;height:5px;border:.8px solid #cfcfcf;background:#535353;transform:skewX(-18deg)"></div>

<div class="a" style="left:57.5px;top:470.3px;width:99px;height:8.2px;background:#565656"></div>
<div class="a" style="left:36.6px;top:472px;font-size:5.4px;color:#dcdcdc">66.67%</div>
<div class="a" style="left:60.5px;top:472px;width:4.5px;height:4.5px;border-radius:50%;background:#bdbdbd"></div>
<div class="a" style="left:61.8px;top:473.3px;width:1.9px;height:1.9px;border-radius:50%;background:#565656"></div>
<div class="a" style="left:86.5px;top:471.8px;font-size:5.5px;color:#e4e4e4">文档:3.46M/3.11M</div>
<div class="a" style="left:150px;top:472.2px;width:0;height:0;border-top:2.2px solid transparent;border-bottom:2.2px solid transparent;border-left:3px solid #e8e8e8"></div>
<div class="a" style="left:37px;top:479.6px;width:20px;height:8.4px;background:#505050"></div>
<div class="a" style="left:39.3px;top:481.2px;font-size:5.5px;color:#dedede">时间轴</div>
<div class="a" style="left:752.5px;top:470px;width:9.5px;height:8.7px;background:#4a4a4a"></div>
<div class="a" style="left:754px;top:482.5px;width:5px;height:.9px;background:#aaa;box-shadow:0 1.8px 0 #aaa"></div>
<!--TOOLS-->

<div class="a" style="left:762px;top:28px;width:138px;height:5px;background:#323232"></div>
<div class="a" style="left:762.5px;top:35px;width:19px;height:453px;background:#525252"></div>
<div class="a" style="left:762.5px;top:33px;width:19px;height:2.5px;background:#3e3e3e"></div>
<div class="a" style="left:776px;top:31.8px;width:4px;height:1.6px;background:#c8c8c8"></div>
<div class="a" style="left:893px;top:30.5px;width:4px;height:1.6px;background:#c8c8c8"></div>
<!-- history panel -->
<div class="a" style="left:783px;top:33px;width:117px;height:10px;background:#3d3d3d"></div>
<div class="a" style="left:783px;top:43px;width:117px;height:218.5px;background:#4b4b4b"></div>
<div class="a" style="left:801.5px;top:35px;width:28.5px;height:8px;background:#4b4b4b;border-radius:1px 1px 0 0"></div>
<div class="a" style="left:786px;top:36.5px;font-size:5.6px;color:#8c8c8c">属性</div>
<div class="a" style="left:804.5px;top:36.5px;font-size:5.6px;color:#dedede">历史记录</div>
<div class="a" style="left:892.5px;top:37.5px;width:4.5px;height:.8px;background:#bbb;box-shadow:0 1.5px 0 #bbb,0 3px 0 #bbb;z-index:3"></div>
<div class="a" style="left:783px;top:61px;width:106px;height:.6px;background:#3e3e3e"></div>
<div class="a" style="left:783.5px;top:47.5px;width:9px;height:9px;border:.6px solid #3a3a3a;background:#505050"></div>
<svg class="a" style="left:784.5px;top:48.5px" width="7" height="7" viewBox="0 0 12 12"><path d="M10.5 2 L6 6.5" stroke="#ddd" stroke-width="1.6" stroke-linecap="round"/><path d="M6 6.3 Q4.2 6.6 3.8 8.2 Q3.4 9.4 2.2 9.8 Q5 10.4 6.2 8.6Z" fill="#ddd"/><path d="M2 5 A3.4 3.4 0 0 1 6.5 2" fill="none" stroke="#ddd" stroke-width="1"/></svg>
<div class="a" style="left:794.5px;top:44.8px;width:12.8px;height:15px;background:#fff;border:.5px solid #222"></div>
<svg class="a" style="left:794.5px;top:44.8px" width="12.8" height="15" viewBox="238 77 321 363"><use href="#fig"/></svg>
<div class="a" style="left:810px;top:49.8px;font-size:5.7px;color:#ececec">火焰人素材.jpg</div>
<div class="a" style="left:785px;top:64.60000000000001px;width:7px;height:7px;border:.5px solid #404040;opacity:1"></div>
<div class="a" style="left:797.5px;top:64.8px;width:5.4px;height:6.8px;background:#a9a9a9;opacity:1;clip-path:polygon(0 0,70% 0,100% 25%,100% 100%,0 100%)"></div>
<div class="a" style="left:810px;top:65.2px;font-size:5.7px;color:#e6e6e6">打开</div>
<div class="a" style="left:783px;top:73.4px;width:106px;height:.5px;background:#424242"></div>
<div class="a" style="left:785px;top:75.30000000000001px;width:7px;height:7px;border:.5px solid #404040;opacity:1"></div>
<div class="a" style="left:797.5px;top:75.5px;width:5.4px;height:6.8px;background:#a9a9a9;opacity:1;clip-path:polygon(0 0,70% 0,100% 25%,100% 100%,0 100%)"></div>
<div class="a" style="left:810px;top:75.9px;font-size:5.7px;color:#e6e6e6">建立图层</div>
<div class="a" style="left:783px;top:84.10000000000001px;width:106px;height:.5px;background:#424242"></div>
<div class="a" style="left:783px;top:84.39999999999999px;width:106px;height:10.6px;background:#5a6a83"></div>
<div class="a" style="left:785px;top:86.0px;width:7px;height:7px;border:.5px solid #404040;opacity:1"></div>
<div class="a" style="left:797.5px;top:86.19999999999999px;width:5.4px;height:6.8px;background:#a9a9a9;opacity:1;clip-path:polygon(0 0,70% 0,100% 25%,100% 100%,0 100%)"></div>
<div class="a" style="left:810px;top:86.6px;font-size:5.7px;color:#e6e6e6">选择全部图层</div>
<div class="a" style="left:783px;top:94.8px;width:106px;height:.5px;background:#424242"></div>
<div class="a" style="left:785px;top:96.60000000000001px;width:7px;height:7px;border:.5px solid #404040;opacity:.45"></div>
<div class="a" style="left:797.5px;top:96.8px;width:5.4px;height:6.8px;background:#a9a9a9;opacity:.45;clip-path:polygon(0 0,70% 0,100% 25%,100% 100%,0 100%)"></div>
<div class="a" style="left:810px;top:97.2px;font-size:5.7px;font-style:italic;color:#858585">查找边缘</div>
<div class="a" style="left:783px;top:105.4px;width:106px;height:.5px;background:#424242"></div>

<div class="a" style="left:889px;top:43px;width:3.5px;height:209px;background:#515151"></div><div class="a" style="left:892.5px;top:43px;width:3px;height:218.5px;background:#3e3e3e"></div>
<div class="a" style="left:783px;top:252.3px;width:117px;height:.6px;background:#3a3a3a"></div>
<!-- history bottom icons -->
<svg class="a" style="left:850.5px;top:253.5px" width="9" height="7.5" viewBox="0 0 12 10"><path d="M6 1 L9.5 5 H7.5 V6 H4.5 V5 H2.5Z" fill="#d4d4d4"/><rect x="2.5" y="7" width="7" height="2.2" fill="#d4d4d4"/></svg>
<svg class="a" style="left:865.5px;top:253.8px" width="9" height="7.5" viewBox="0 0 12 10"><rect x="1.5" y="2.5" width="9" height="6.5" rx="1" fill="#d4d4d4"/><rect x="4" y="1.2" width="4" height="2" fill="#d4d4d4"/><circle cx="6" cy="5.8" r="2" fill="#4b4b4b"/></svg>
<svg class="a" style="left:879.5px;top:253.5px" width="8" height="8" viewBox="0 0 10 10"><path d="M2.5 3.2h5l-.5 6h-4z" fill="#bdbdbd"/><rect x="2" y="1.8" width="6" height="1" fill="#bdbdbd"/><rect x="4" y="1" width="2" height="1" fill="#bdbdbd"/></svg>
<!-- layers panel -->
<div class="a" style="left:783px;top:261.5px;width:117px;height:9px;background:#3d3d3d"></div>
<div class="a" style="left:783px;top:270.5px;width:117px;height:217.5px;background:#4b4b4b"></div>
<div class="a" style="left:798.5px;top:263px;width:15.5px;height:8px;background:#4b4b4b;border-radius:1px 1px 0 0"></div>
<div class="a" style="left:786px;top:264.3px;font-size:5.6px;color:#8c8c8c">通道</div>
<div class="a" style="left:800.8px;top:264.3px;font-size:5.6px;color:#dedede">图层</div>
<div class="a" style="left:817px;top:264.3px;font-size:5.6px;color:#8c8c8c">路径</div>
<div class="a" style="left:892.5px;top:265px;width:4.5px;height:.8px;background:#bbb;box-shadow:0 1.5px 0 #bbb,0 3px 0 #bbb;z-index:3"></div>
<!-- filter row -->
<div class="a" style="left:785.5px;top:272.8px;width:31px;height:8px;background:linear-gradient(#6a6a6a,#595959);border:.5px solid #3a3a3a;border-radius:1px"></div>
<svg class="a" style="left:787px;top:274.3px" width="5" height="5" viewBox="0 0 6 6"><circle cx="2.4" cy="2.4" r="1.6" fill="none" stroke="#ddd" stroke-width=".8"/><path d="M3.6 3.6 L5.4 5.4" stroke="#ddd" stroke-width=".9"/></svg>
<div class="a" style="left:792.5px;top:274px;font-size:5.6px;color:#e4e4e4">类型</div>
<div class="a" style="left:811.5px;top:274.6px;width:0;height:0;border-left:1.3px solid transparent;border-right:1.3px solid transparent;border-bottom:1.5px solid #d0d0d0"></div>
<div class="a" style="left:811.5px;top:277.4px;width:0;height:0;border-left:1.3px solid transparent;border-right:1.3px solid transparent;border-top:1.5px solid #d0d0d0"></div>
<svg class="a" style="left:826px;top:273.5px" width="7" height="7" viewBox="0 0 8 8"><rect x="1" y="1.5" width="6" height="5" fill="none" stroke="#d0d0d0" stroke-width=".9"/><path d="M1.5 6 L3.2 3.8 L4.4 5 L5.4 4.2 L6.5 6Z" fill="#d0d0d0"/></svg>
<svg class="a" style="left:838px;top:273.5px" width="7" height="7" viewBox="0 0 8 8"><circle cx="4" cy="4" r="2.8" fill="none" stroke="#d0d0d0" stroke-width=".9"/><path d="M4 1.2 A2.8 2.8 0 0 0 4 6.8Z" fill="#d0d0d0"/></svg>
<div class="a" style="left:850.3px;top:273.6px;font-size:6.4px;font-weight:bold;font-family:'Liberation Serif',serif;color:#d0d0d0">T</div>
<svg class="a" style="left:860.5px;top:273.5px" width="7" height="7" viewBox="0 0 8 8"><rect x="1.8" y="1.8" width="4.4" height="4.4" fill="none" stroke="#d0d0d0" stroke-width=".7"/><rect x=".8" y=".8" width="2" height="2" fill="#d0d0d0"/><rect x="5.2" y=".8" width="2" height="2" fill="#d0d0d0"/><rect x=".8" y="5.2" width="2" height="2" fill="#d0d0d0"/><rect x="5.2" y="5.2" width="2" height="2" fill="#d0d0d0"/></svg>
<svg class="a" style="left:872px;top:273px" width="7" height="8" viewBox="0 0 8 9"><path d="M2.2 2.2 h1.2 l.8-1 h1.6 l.8 1 h0 v1 h-3 v3.6 h-1.4z" fill="#d0d0d0"/><rect x="3.4" y="4.6" width="3.4" height="3.2" fill="#d0d0d0"/></svg>
<div class="a" style="left:888.3px;top:273.2px;width:3.6px;height:3.6px;background:#d8d8d8;border-radius:50%"></div>
<div class="a" style="left:889.4px;top:276.6px;width:1.4px;height:3.4px;background:#8a8a8a"></div>
<!-- blend row -->
<div class="a" style="left:785.5px;top:285.5px;width:49.5px;height:8.6px;background:linear-gradient(#6a6a6a,#595959);border:.5px solid #3a3a3a;border-radius:1px"></div>
<div class="a" style="left:788px;top:287px;font-size:5.6px;color:#e4e4e4">正常</div>
<div class="a" style="left:830px;top:287.4px;width:0;height:0;border-left:1.3px solid transparent;border-right:1.3px solid transparent;border-bottom:1.5px solid #d0d0d0"></div>
<div class="a" style="left:830px;top:290.3px;width:0;height:0;border-left:1.3px solid transparent;border-right:1.3px solid transparent;border-top:1.5px solid #d0d0d0"></div>
<div class="a" style="left:839.5px;top:287px;font-size:5.6px;color:#e4e4e4">不透明度:</div>
<div class="a" style="left:867.5px;top:285.5px;width:16px;height:8.6px;background:#3a3a3a;border:.5px solid #2c2c2c"></div>
<div class="a" style="left:869px;top:287.2px;font-size:5.4px;color:#e8e8e8">100%</div>
<div class="a" style="left:884.3px;top:285.5px;width:7.5px;height:8.6px;background:linear-gradient(#6a6a6a,#595959);border:.5px solid #3a3a3a"></div>
<div class="a" style="left:886.6px;top:288.8px;width:0;height:0;border-left:1.5px solid transparent;border-right:1.5px solid transparent;border-top:1.8px solid #d8d8d8"></div>
<!-- lock row -->
<div class="a" style="left:785.5px;top:300.2px;font-size:5.6px;color:#e4e4e4">锁定:</div>
<svg class="a" style="left:802px;top:299.8px" width="6.5" height="6.5" viewBox="0 0 8 8"><rect x="1" y="1" width="6" height="6" fill="none" stroke="#d0d0d0" stroke-width=".8"/><path d="M1 1h2v2h-2zM5 1h2v2h-2zM3 3h2v2h-2zM1 5h2v2h-2zM5 5h2v2h-2z" fill="#d0d0d0"/></svg>
<svg class="a" style="left:812.5px;top:299.3px" width="7.5" height="7.5" viewBox="0 0 12 12"><path d="M10.5 1.5 L5.5 6.5" stroke="#d8d8d8" stroke-width="1.5" stroke-linecap="round"/><path d="M5.6 6.2 Q3.8 6.4 3.4 8.2 Q3 9.6 1.5 10 Q4.8 10.6 6 8.6 Q6.5 7.4 5.6 6.2Z" fill="#d8d8d8"/></svg>
<svg class="a" style="left:822.5px;top:299.5px" width="7" height="7" viewBox="0 0 8 8"><path d="M4 .6v6.8M.6 4h6.8" stroke="#d0d0d0" stroke-width=".8"/><path d="M4 0l1.2 1.5h-2.4zM4 8l1.2-1.5h-2.4zM0 4l1.5-1.2v2.4zM8 4l-1.5-1.2v2.4z" fill="#d0d0d0"/></svg>
<svg class="a" style="left:833px;top:299.3px" width="6.5" height="7.5" viewBox="0 0 8 9"><rect x="1.2" y="4" width="5.6" height="4.2" fill="#d0d0d0"/><path d="M2.4 4 V2.8 A1.6 1.6 0 0 1 5.6 2.8 V4" fill="none" stroke="#d0d0d0" stroke-width=".9"/></svg>
<div class="a" style="left:850.5px;top:300.2px;font-size:5.6px;color:#e4e4e4">填充:</div>
<div class="a" style="left:867.5px;top:298.6px;width:16px;height:8.6px;background:#3a3a3a;border:.5px solid #2c2c2c"></div>
<div class="a" style="left:869px;top:300.3px;font-size:5.4px;color:#e8e8e8">100%</div>
<div class="a" style="left:884.3px;top:298.6px;width:7.5px;height:8.6px;background:linear-gradient(#6a6a6a,#595959);border:.5px solid #3a3a3a"></div>
<div class="a" style="left:886.6px;top:301.9px;width:0;height:0;border-left:1.5px solid transparent;border-right:1.5px solid transparent;border-top:1.8px solid #d8d8d8"></div>
<!-- layer row -->
<div class="a" style="left:783px;top:309.8px;width:109.5px;height:.6px;background:#3c3c3c"></div>
<div class="a" style="left:796.5px;top:310.4px;width:96px;height:18.8px;background:#5a6a83"></div>
<div class="a" style="left:783px;top:329.2px;width:109.5px;height:.6px;background:#3c3c3c"></div>
<div class="a" style="left:796px;top:310.4px;width:.6px;height:18.8px;background:#3c3c3c"></div>
<svg class="a" style="left:785.2px;top:316.8px" width="8" height="6" viewBox="0 0 10 7"><path d="M.6 3.5 Q5 -.8 9.4 3.5 Q5 7.8 .6 3.5Z" fill="none" stroke="#c8c8c8" stroke-width=".9"/><circle cx="5" cy="3.5" r="1.5" fill="#c8c8c8"/></svg>
<div class="a" style="left:797.8px;top:311.3px;width:14px;height:17px;background:#fff;border:.5px solid #bbb;outline:.4px solid #2c2c2c"></div>
<svg class="a" style="left:799.3px;top:312.5px" width="11" height="14.5" viewBox="238 77 321 363" preserveAspectRatio="none"><use href="#fig"/></svg>
<div class="a" style="left:816.5px;top:316.8px;font-size:5.7px;color:#f0f0f0">图层 0</div>
<div class="a" style="left:892.5px;top:270.5px;width:3px;height:217.5px;background:#3e3e3e"></div>
<div class="a" style="left:783px;top:479px;width:117px;height:.6px;background:#3a3a3a"></div>
<svg class="a" style="left:803.6px;top:480.5px" width="8" height="6" viewBox="0 0 10 7"><rect x=".8" y="2" width="4.6" height="3" rx="1.5" fill="none" stroke="#777" stroke-width="1"/><rect x="4.6" y="2" width="4.6" height="3" rx="1.5" fill="none" stroke="#777" stroke-width="1"/></svg>
<div class="a" style="left:816.6px;top:480px;font-size:6px;font-style:italic;font-weight:bold;color:#d4d4d4;font-family:'Liberation Serif',serif">fx</div><div class="a" style="left:823.1px;top:484.5px;width:0;height:0;border-left:1px solid transparent;border-right:1px solid transparent;border-top:1.3px solid #ccc"></div>
<div class="a" style="left:829.4px;top:480.7px;width:7.2px;height:5.8px;background:#d4d4d4"></div><div class="a" style="left:831.6px;top:482.2px;width:2.8px;height:2.8px;border-radius:50%;background:#4b4b4b"></div>
<svg class="a" style="left:842.3px;top:480.2px" width="7" height="7" viewBox="0 0 8 8"><circle cx="4" cy="4" r="3" fill="none" stroke="#d4d4d4" stroke-width="1"/><path d="M4 1 A3 3 0 0 0 4 7Z" fill="#d4d4d4"/></svg><div class="a" style="left:849.1999999999999px;top:484.5px;width:0;height:0;border-left:1px solid transparent;border-right:1px solid transparent;border-top:1.3px solid #ccc"></div>
<svg class="a" style="left:854px;top:480.3px" width="8" height="6.5" viewBox="0 0 10 8"><path d="M.8 1h3.2l1 1.2h4.2v5H.8z" fill="#d4d4d4"/></svg>
<svg class="a" style="left:867.1px;top:480.2px" width="7" height="7" viewBox="0 0 8 8"><path d="M1.2 1h4l1.8 1.8v4.4h-5.8z" fill="#d4d4d4"/><path d="M5 1v2h2" fill="none" stroke="#4b4b4b" stroke-width=".7"/></svg>
<svg class="a" style="left:879.5px;top:480px" width="7" height="7.5" viewBox="0 0 10 10"><path d="M2.5 3.2h5l-.5 6h-4z" fill="#9a9a9a"/><rect x="2" y="1.8" width="6" height="1" fill="#9a9a9a"/><rect x="4" y="1" width="2" height="1" fill="#9a9a9a"/></svg>
<svg class="a" style="opacity:.8;left:767.5px;top:40.3px" width="10" height="10" viewBox="0 0 10 10"><path d="M5 1.5v3M3 2.2l.8 2.6M7 2.2l-.8 2.6" stroke="#ddd" stroke-width="1"/><rect x="3.2" y="5.4" width="3.6" height="3.4" fill="#ddd"/></svg>
<svg class="a" style="opacity:.8;left:767.5px;top:54.7px" width="10" height="10" viewBox="0 0 10 10"><path d="M.8 2.8 L9.2 2.2 L9.2 4.6 L6 4.4 L5.4 8.6 L4.4 8.6 L3.9 4.3 L.8 4.4Z" fill="#ddd"/></svg>
<svg class="a" style="opacity:.8;left:767.5px;top:71px" width="10" height="10" viewBox="0 0 10 10"><path d="M4 1.5h2v2.6l1.4 1.4v1H2.6v-1L4 4.1Z" fill="#ddd"/><rect x="1.6" y="7.4" width="6.8" height="1.4" fill="#ddd"/></svg>
<svg class="a" style="opacity:.8;left:767.5px;top:92px" width="10" height="10" viewBox="0 0 10 10"><path d="M2 8.6 L4.6 1.4 h.8 L8 8.6 h-1.2 l-.7-2 H3.9 l-.7 2Z M4.2 5.6h1.6L5 3.2Z" fill="#ddd"/><rect x="8.4" y="1.4" width=".9" height="7.2" fill="#ddd"/></svg>
<svg class="a" style="opacity:.8;left:767.5px;top:106.5px" width="10" height="10" viewBox="0 0 10 10"><path d="M2.2 1.6 h5.6 v1 h-.8 v2.6 h-4 v-2.6 h-.8z M4.5 5.2 h1 v3.6 h-1z" fill="#ddd"/></svg>
<svg class="a" style="opacity:.8;left:767.5px;top:125px" width="10" height="10" viewBox="0 0 10 10"><path d="M1.8 1.8 L8.2 8.2 M8.2 1.8 L1.8 8.2" stroke="#ddd" stroke-width="1.3" stroke-linecap="round"/><circle cx="2" cy="8" r="1" fill="#ddd"/></svg>
<svg class="a" style="opacity:.8;left:767.5px;top:144px" width="10" height="10" viewBox="0 0 10 10"><circle cx="5" cy="5" r="4" fill="#e4e4e4"/><circle cx="3.4" cy="5" r="1.1" fill="#525252"/><circle cx="6.6" cy="5" r="1.1" fill="#525252"/></svg>
<div class="a" style="left:765px;top:36.5px;width:14px;height:.6px;background:#424242"></div>
<div class="a" style="left:765px;top:52px;width:14px;height:.6px;background:#424242"></div>
<div class="a" style="left:765px;top:68px;width:14px;height:.6px;background:#424242"></div>
<div class="a" style="left:765px;top:86.5px;width:14px;height:.6px;background:#424242"></div>
<div class="a" style="left:765px;top:104.5px;width:14px;height:.6px;background:#424242"></div>
<div class="a" style="left:765px;top:121px;width:14px;height:.6px;background:#424242"></div>
<div class="a" style="left:765px;top:140.5px;width:14px;height:.6px;background:#424242"></div>
<div class="a" style="left:765px;top:158.5px;width:14px;height:.6px;background:#424242"></div>
<!--PANELS-->
<svg class="a" width="0" height="0"><defs><g id="fig">
<defs>
<filter id="b1" x="-20%" y="-20%" width="140%" height="140%"><feGaussianBlur stdDeviation=".55"/></filter>
<filter id="b4" x="-20%" y="-20%" width="140%" height="140%"><feGaussianBlur stdDeviation="1.3"/></filter>
<filter id="b2" x="-30%" y="-30%" width="160%" height="160%"><feGaussianBlur stdDeviation="2.2"/></filter>
<filter id="b3" x="-30%" y="-30%" width="160%" height="160%"><feGaussianBlur stdDeviation="5"/></filter>
<linearGradient id="armg" x1="0" y1="0" x2="1" y2="1"><stop offset="0" stop-color="#d6a47b"/><stop offset=".55" stop-color="#a6714a"/><stop offset="1" stop-color="#7a4c2d"/></linearGradient>
<linearGradient id="legg" x1="0" y1="0" x2="1" y2="0"><stop offset="0" stop-color="#b98763"/><stop offset=".3" stop-color="#ecc7ab"/><stop offset=".75" stop-color="#e2b595"/><stop offset="1" stop-color="#c08c69"/></linearGradient>
<linearGradient id="shing" x1="0" y1="0" x2="0" y2="1"><stop offset="0" stop-color="#eec9ae"/><stop offset=".6" stop-color="#e4b797"/><stop offset="1" stop-color="#c39070"/></linearGradient>
<linearGradient id="redg" x1="0" y1="0" x2="1" y2="0"><stop offset="0" stop-color="#e23c44"/><stop offset=".5" stop-color="#d32a34"/><stop offset="1" stop-color="#a81a25"/></linearGradient>
<linearGradient id="torsog" x1="0" y1="0" x2="1" y2="0"><stop offset="0" stop-color="#e9c3a3"/><stop offset=".5" stop-color="#c8946d"/><stop offset="1" stop-color="#9a6845"/></linearGradient>
</defs>
<g filter="url(#b3)" opacity=".55"><path d="M352 222 L326 256 L338 274 L380 286 L430 268 L470 244 L452 226 L400 214Z" fill="#e9e6e0"/></g>
<g filter="url(#b2)" opacity=".3"><path d="M400 432 L470 428 L545 424 L552 432 L470 436 L402 437Z" fill="#d8d6d2"/></g>
<g filter="url(#b1)">
<!-- standing leg -->
<path d="M385 276 L404 274 Q405.6 288 407.4 300 Q410 316 411.2 330 Q411.6 340 409.6 351 Q407.6 362 405.6 374 Q404.4 384 403.4 393 L393.2 393 Q394.6 384 395.4 372 Q396 360 395 348 Q393.6 336 392.2 326 Q390 312 388 300 Q386.4 288 385 276Z" fill="url(#legg)"/>
<!-- standing shoe -->
<path d="M392.8 392 L404.2 392 Q405.6 397 405.2 402 Q404.6 411 402.5 420 Q401 426 399.6 431 Q398.8 433.6 397.4 433.4 Q396.2 433 395.4 429 Q393.4 421 390.6 412 Q388.8 406 389.2 400 Q390.4 395 392.8 392Z" fill="#e6c6ae"/>
<path d="M392.6 393.2 L404.2 392.6 L404.4 395.4 L392.3 396.2Z" fill="#f4e0d0"/>
<path d="M396.3 419 L402.6 419 Q401 426 399.6 431 Q398.8 433.6 397.4 433.4 Q396.2 433 395.4 429Z" fill="#f2e0d2"/>
<!-- bent leg thigh -->
<path d="M360 279 L381 280 Q376 287 372 292 Q368 297 365 302 L372 309 L356 318 Q352.6 316 351 312.6 Q348.6 308 349.4 303 Q350.6 297 353.4 291 Q356.4 285 360 279Z" fill="#d9a886"/>
<path d="M362 281 L372 282 Q367 289 364 294 Q360 300 358 305 L353 306 Q353.6 300 355.6 295 Q358 288 362 281Z" fill="#f0ccb0"/>
<path d="M372 281 L381 280.5 Q376 287 372 292 L366 301 L363 300 Q365 295 368 290Z" fill="#9c6d4c"/>
<!-- shin -->
<path d="M363 301.5 Q374 295 385 289.4 Q403 288 421 288.6 L430 297.5 Q420 300.4 410 303 Q397 305.6 385 308.8 Q370 313 355.5 317.8 L351 312Z" fill="url(#shing)"/>
<!-- lifted shoe -->
<path d="M420.5 283 Q424 280 428 279 Q432 280.6 437 282 Q442 283.6 447 283.6 Q451 282.6 455 280.5 Q458.6 279 461.8 278 Q464 279.6 463.6 281.5 Q461 285 458 287.5 Q454 291 450 293.2 Q446 295.4 441 296.8 Q436 298.6 431.5 300.3 L424.5 296Z" fill="#c9ac90"/>
<path d="M428 279.5 Q432 281 437 282.4 Q442 283.8 447 283.8 Q454 281.6 461.8 278.2 L463.4 281 Q458 283.6 452 285.5 Q446 286.6 440 286 Q434 285 430 283.5Z" fill="#96795e"/>
<path d="M421 283.5 L426 282 L431.5 299.5 L427 299Z" fill="#ead3bd"/>
<!-- tutu -->
<g filter="url(#b4)">
<path d="M359 214 L395 213.5 Q410 218 426 222.5 Q446 229 460 238 L461 243.5 Q444 254 426 264 Q408 275 392 280 Q378 284 364 282 Q352 279 347 274 Q344 262 348 245 Q351 234 355 224Z" fill="#e9e7e1"/>
<path d="M393 216 Q412 219.5 430 225.5 Q448 231 462 239.5 L460 244 Q448 250.5 438 255.5 Q424 264 410 270 L399 273 Q399 256 395 240 Q392 228 386 221Z" fill="#d9d5ca"/>
<path d="M383 215.5 L398 217.5 Q404 222 408 229 L392 228 Q387 222 383 215.5Z" fill="#c6c0b2"/>
<path d="M362 228 L370 226 Q368 250 364 274 L356 272 Q358 250 362 228Z" fill="#e2dfd8"/>
<path d="M376 232 L384 232 Q386 254 386 276 L377 277 Q378 254 376 232Z" fill="#e4e1da"/>
<path d="M404 236 Q420 240 440 248 L430 256 Q416 246 404 242Z" fill="#d2cdc2"/>
</g>
<!-- waist band -->
<path d="M357.5 212.5 L392.5 206.5 L397 213 L395 217.5 L360 219Z" fill="#f3f1ee"/>
<!-- torso back skin -->
<path d="M394 170 Q404 166 412.5 161 Q415 165 413 170 Q410 178 406 186 Q402.6 194 399.6 201 L394 208 L388 200 Q392 186 394 170Z" fill="url(#torsog)"/>
<!-- red top -->
<path d="M359.2 185 L376 187 Q384 190 390 193 Q394 196.6 396.5 200 L393 207.4 Q384 209.6 375 211 Q366 212.6 356.6 213.6 Q356.8 206 357.5 200Z" fill="url(#redg)"/>
<path d="M372.6 158 L376.6 159.6 Q373 167 370.4 174 L366.2 173 Q369 165 372.6 158Z" fill="#dc3440"/>
<!-- chest/neck -->
<path d="M386 149 Q394 141 403 137.5 L410 141 L412 161 L402 152 L392 152Z" fill="#b58560"/>
<path d="M375.5 158.5 Q384 153 392 149.5 Q398 148.6 404 150 L413 162 Q408 172 401 180.5 L392 182 L380 174 L371 173Z" fill="#d9a985"/>
<path d="M384 158 Q389 155 394 154 Q398.6 158 401 164 Q398 170 394 174 L385 170Z" fill="#f3d6bb"/>
<path d="M402 150 L410 156 L413 162 Q410 168 406 173 Q405 162 402 150Z" fill="#a7744f"/>
<!-- upper arm (bent) -->
<path d="M332 169.2 Q345 170.4 358.5 173 Q370 174.6 380 175.6 Q390 175.4 396.7 172.8 Q401.4 176 401.6 182 Q401 188 398.6 192 Q395.6 195 391.7 195.4 Q383 192.4 375 188.6 Q362 185 350 181.8 Q341 178.6 334.5 174.2Z" fill="url(#armg)"/>
<path d="M338 170.6 Q348 172 358 173.6 Q370 175.4 380 176.6 Q388 177 394 176 L392 181 Q382 182 372 181.5 Q360 179.8 350 177.5Z" fill="#e3b48e" opacity=".8"/>
<!-- forearm (bent) -->
<path d="M331.2 168 Q340 163 350 157.8 Q361 152 371.5 146.4 L380.5 142 Q385 141.6 387.5 143.6 Q390 147 389.4 150.6 Q387 153.6 384 154.6 L375 152.8 Q364 158.4 353.5 164.2 Q345 169 337 173.6 Q333 174 331.6 172Z" fill="url(#armg)"/>
<path d="M336 167.2 Q344 162.8 352 158.4 Q362 153 372 147.8 L380 144.6 L379.6 147.4 Q370 152.6 360 157.8 Q350 163 341 168.4Z" fill="#e8ba94" opacity=".85"/>
<!-- raised arm -->
<path d="M423.5 123.5 Q434 113 444.4 105.6 Q458 96 471 89.6 Q481 84 489 81.4 Q494 80.4 497.8 82.3 Q500.6 86 501.8 89.6 Q503.2 93 503.8 96.2 L501.6 95.6 Q500 92 498 89.8 L495 87.6 L491 88.8 Q483 91 475.6 95.4 Q466 101.6 457.8 109.4 Q449 118 441.5 127.5 L434 131Z" fill="#b27c55"/>
<path d="M428 122.5 Q437 113 446 107.4 Q459 98 471.5 91.4 Q481 86 489 83.4 L489.5 85.6 Q480 89 473 93.4 Q461 101 450 110.6 Q442 118 435 126.5Z" fill="#ddae88" opacity=".85"/>
<!-- head -->
<g transform="rotate(40 425.5 142)">
<ellipse cx="425.5" cy="142" rx="14.2" ry="18.2" fill="#b08a5e"/>
<path d="M411.6 139 Q412 123.8 425.5 123.8 Q439 123.8 439.5 140 Q433 131 425.5 131 Q417 131 411.6 139Z" fill="#cba97a"/>
<ellipse cx="423.6" cy="147.4" rx="11.2" ry="12.6" fill="#d4a381"/>
<ellipse cx="420.6" cy="148.5" rx="6" ry="8.4" fill="#ecc8ad"/>
<path d="M414 141 h7 v1.8 h-7z M425.6 141 h6.6 v1.8 h-6.6z" fill="#4e3222"/>
<path d="M421.5 146 h1.6 v5 h-2.6z" fill="#c08c6c"/>
<path d="M419.4 154 h7 v1.6 h-7z" fill="#a8554f"/>
<path d="M433.5 135 Q440.4 142 438 153 Q434 159.6 429 160 Q436 151 433.5 135Z" fill="#86583a"/>
</g>
</g>
</g></defs></svg>
<svg class="a" style="left:238px;top:77px" width="321" height="363" viewBox="238 77 321 363"><use href="#fig"/></svg>
<!--FIGURE-->

<div class="a" style="left:175px;top:11px;width:110px;height:211px;background:#f0f0f0;border:.7px solid #9a9a9a;box-shadow:1.2px 1.2px 1.5px rgba(0,0,0,.55)"></div>
<div class="a" style="left:176px;top:103.6px;width:107.5px;height:9.7px;background:#0a78d7"></div>
<div class="a mt" style="left:185.2px;top:15.2px;color:#000">查找边缘</div>
<div class="a mt" style="right:623.8px;top:15.2px;letter-spacing:.13px;color:#000">Ctrl+F</div>
<div class="a mt" style="left:185.2px;top:29.3px;color:#000">转换为智能滤镜</div>
<div class="a mt" style="left:185.2px;top:43.8px;color:#000">滤镜库(G)...</div>
<div class="a mt" style="left:185.2px;top:53.3px;color:#000">自适应广角(A)...</div>
<div class="a mt" style="right:623.8px;top:53.3px;letter-spacing:.13px;color:#000">Shift+Ctrl+A</div>
<div class="a mt" style="left:185.2px;top:62.9px;color:#000">镜头校正(R)...</div>
<div class="a mt" style="right:623.8px;top:62.9px;letter-spacing:.13px;color:#000">Shift+Ctrl+R</div>
<div class="a mt" style="left:185.2px;top:72.5px;color:#000">液化(L)...</div>
<div class="a mt" style="right:623.8px;top:72.5px;letter-spacing:.13px;color:#000">Shift+Ctrl+X</div>
<div class="a mt" style="left:185.2px;top:82.3px;color:#000">油画(O)...</div>
<div class="a mt" style="left:185.2px;top:92.1px;color:#000">消失点(V)...</div>
<div class="a mt" style="right:623.8px;top:92.1px;letter-spacing:.13px;color:#000">Alt+Ctrl+V</div>
<div class="a mt" style="left:185.2px;top:106.9px;color:#fff">风格化</div>
<div class="a" style="left:278px;top:106.4px;width:0;height:0;border-top:2.1px solid transparent;border-bottom:2.1px solid transparent;border-left:2.5px solid #fff"></div>
<div class="a mt" style="left:185.2px;top:117.0px;color:#000">模糊</div>
<div class="a" style="left:278px;top:116.5px;width:0;height:0;border-top:2.1px solid transparent;border-bottom:2.1px solid transparent;border-left:2.5px solid #111"></div>
<div class="a mt" style="left:185.2px;top:126.9px;color:#000">扭曲</div>
<div class="a" style="left:278px;top:126.4px;width:0;height:0;border-top:2.1px solid transparent;border-bottom:2.1px solid transparent;border-left:2.5px solid #111"></div>
<div class="a mt" style="left:185.2px;top:136.7px;color:#000">锐化</div>
<div class="a" style="left:278px;top:136.2px;width:0;height:0;border-top:2.1px solid transparent;border-bottom:2.1px solid transparent;border-left:2.5px solid #111"></div>
<div class="a mt" style="left:185.2px;top:146.5px;color:#000">视频</div>
<div class="a" style="left:278px;top:146.0px;width:0;height:0;border-top:2.1px solid transparent;border-bottom:2.1px solid transparent;border-left:2.5px solid #111"></div>
<div class="a mt" style="left:185.2px;top:156.6px;color:#000">像素化</div>
<div class="a" style="left:278px;top:156.1px;width:0;height:0;border-top:2.1px solid transparent;border-bottom:2.1px solid transparent;border-left:2.5px solid #111"></div>
<div class="a mt" style="left:185.2px;top:166.6px;color:#000">渲染</div>
<div class="a" style="left:278px;top:166.1px;width:0;height:0;border-top:2.1px solid transparent;border-bottom:2.1px solid transparent;border-left:2.5px solid #111"></div>
<div class="a mt" style="left:185.2px;top:176.6px;color:#000">杂色</div>
<div class="a" style="left:278px;top:176.1px;width:0;height:0;border-top:2.1px solid transparent;border-bottom:2.1px solid transparent;border-left:2.5px solid #111"></div>
<div class="a mt" style="left:185.2px;top:186.6px;color:#000">其它</div>
<div class="a" style="left:278px;top:186.1px;width:0;height:0;border-top:2.1px solid transparent;border-bottom:2.1px solid transparent;border-left:2.5px solid #111"></div>
<div class="a mt" style="left:185.2px;top:200.4px;color:#000">Digimarc</div>
<div class="a" style="left:278px;top:199.9px;width:0;height:0;border-top:2.1px solid transparent;border-bottom:2.1px solid transparent;border-left:2.5px solid #111"></div>
<div class="a mt" style="left:185.2px;top:214.0px;color:#000">浏览联机滤镜...</div>
<div class="a" style="left:177px;top:23.6px;width:106.5px;height:.7px;background:#c4c4c4;box-shadow:0 .7px 0 #fbfbfb"></div>
<div class="a" style="left:177px;top:38.2px;width:106.5px;height:.7px;background:#c4c4c4;box-shadow:0 .7px 0 #fbfbfb"></div>
<div class="a" style="left:177px;top:100.6px;width:106.5px;height:.7px;background:#c4c4c4;box-shadow:0 .7px 0 #fbfbfb"></div>
<div class="a" style="left:177px;top:194.3px;width:106.5px;height:.7px;background:#c4c4c4;box-shadow:0 .7px 0 #fbfbfb"></div>
<div class="a" style="left:177px;top:208.5px;width:106.5px;height:.7px;background:#c4c4c4;box-shadow:0 .7px 0 #fbfbfb"></div>

<div class="a" style="left:283.3px;top:102.6px;width:44.4px;height:81.5px;background:#f0f0f0;border:.7px solid #9a9a9a;box-shadow:1.2px 1.2px 1.5px rgba(0,0,0,.4)"></div>
<div class="a" style="left:284.4px;top:103.7px;width:42.2px;height:9.6px;background:#0a78d7"></div>
<div class="a mt" style="left:292.8px;top:106.9px;color:#fff">查找边缘</div>
<div class="a mt" style="left:292.8px;top:116.9px;color:#000">等高线...</div>
<div class="a mt" style="left:292.8px;top:126.7px;color:#000">风...</div>
<div class="a mt" style="left:292.8px;top:136.4px;color:#000">浮雕效果...</div>
<div class="a mt" style="left:292.8px;top:146.4px;color:#000">扩散...</div>
<div class="a mt" style="left:292.8px;top:156.4px;color:#000">拼贴...</div>
<div class="a mt" style="left:292.8px;top:166.4px;color:#000">曝光过度</div>
<div class="a mt" style="left:292.8px;top:176.3px;color:#000">凸出...</div>
<!--MENU-->
</body>
</html>
